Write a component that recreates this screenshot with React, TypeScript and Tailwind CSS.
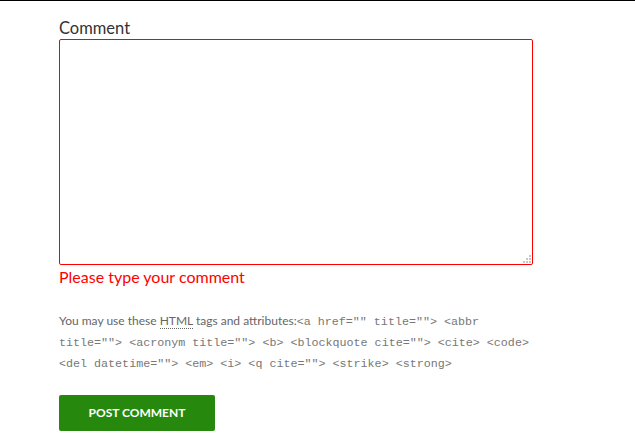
import React from "react"

const tags =
  '<a href="" title=""> <abbr title=""> <acronym title=""> <b> <blockquote cite=""> <cite> <code> <del datetime=""> <em> <i> <q cite=""> <strike> <strong>'

// little dotted grip, like the browser draws at the textarea corner
const Grip = () => (
  <svg width="10" height="10" viewBox="0 0 10 10" className="pointer-events-none absolute bottom-[2px] right-[2px]">
    <rect x="8" y="2" width="2" height="2" fill="#c8c8c8" />
    <rect x="5" y="5" width="2" height="2" fill="#c8c8c8" />
    <rect x="8" y="5" width="2" height="2" fill="#c8c8c8" />
    <rect x="2" y="8" width="2" height="2" fill="#c8c8c8" />
    <rect x="5" y="8" width="2" height="2" fill="#c8c8c8" />
    <rect x="8" y="8" width="2" height="2" fill="#c8c8c8" />
  </svg>
)

const App = () => {
  return (
    <div className="min-h-[447px] w-[635px] border-t border-black bg-white font-['Lato','Liberation_Sans',sans-serif]">
      <div className="pl-[59px] pt-[16px]">
        {/* Comment field */}
        <label className="block text-[16.5px] leading-[22px] text-[#333]">Comment</label>
        <div className="relative w-[474px]">
          <textarea
            className="block h-[226px] w-[474px] resize-none rounded-[2px] border border-[#ff0000] bg-white outline-none"
            aria-invalid="true"
          />
          <Grip />
        </div>
        <p className="mt-[1px] text-[16px] leading-[22px] text-[#ff0000]">Please type your comment</p>

        {/* Allowed tags */}
        <p className="mt-[23px] w-[480px] text-[12px] leading-[20px] text-[#666]">
          You may use these{" "}
          <abbr title="HyperText Markup Language" className="border-b border-dotted border-[#666] no-underline">
            HTML
          </abbr>{" "}
          tags and attributes:
          <code className="font-['Liberation_Mono',monospace] text-[11.7px] leading-[20px] text-[#777]">{tags}</code>
        </p>

        {/* Submit */}
        <button className="mt-[21px] h-[36px] w-[156px] rounded-[2px] bg-[#26890d] text-[12px] font-bold uppercase text-white">
          Post Comment
        </button>
      </div>
    </div>
  )
}

export default App
